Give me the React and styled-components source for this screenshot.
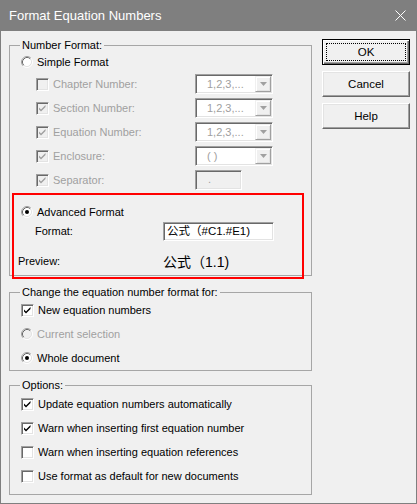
import * as React from 'react'
import styled, { createGlobalStyle } from 'styled-components'

const GlobalStyle = createGlobalStyle`
	html, body {
		margin: 0;
		padding: 0;
		background: #f0f0f0;
	}
	body {
		font-family: "Liberation Sans", "Noto Sans CJK SC", sans-serif;
		font-size: 11px;
		color: #000;
	}
`

const CheckMark = ({ color }) =>
	<svg width="9" height="9" viewBox="0 0 9 9">
		<path d="M1 3.5 L3 5.5 L7.5 1 L7.5 3 L3 7.5 L1 5.5 Z" fill={color}/>
	</svg>

const CheckBox = ({ checked, disabled }) =>
	<StyledCheck $disabled={disabled}>
		{checked && <CheckMark color={disabled ? '#a0a0a0' : '#000'}/>}
	</StyledCheck>

const Radio = ({ checked, disabled }) =>
	<svg width="12" height="12" viewBox="0 0 12 12">
		<circle cx="6" cy="6" r="4.5" fill={disabled ? '#f0f0f0' : '#fff'}/>
		<path d="M2.11 9.89 A5.5 5.5 0 0 1 9.89 2.11" stroke="#a0a0a0" fill="none"/>
		<path d="M9.89 2.11 A5.5 5.5 0 0 1 2.11 9.89" stroke="#ffffff" fill="none"/>
		<path d="M2.82 9.18 A4.5 4.5 0 0 1 9.18 2.82" stroke="#696969" fill="none"/>
		<path d="M9.18 2.82 A4.5 4.5 0 0 1 2.82 9.18" stroke="#e3e3e3" fill="none"/>
		{checked && <circle cx="6" cy="6" r="2" fill="#000"/>}
	</svg>

const Combo = ({ value }) =>
	<StyledCombo>
		<ComboText>{value}</ComboText>
		<ComboButton>
			<svg width="7" height="4" viewBox="0 0 7 4">
				<path d="M0 0 H7 L3.5 4 Z" fill="#a0a0a0"/>
			</svg>
		</ComboButton>
	</StyledCombo>

const simpleRows = [
	{ label: 'Chapter Number:', checked: false, combo: '1,2,3,...' },
	{ label: 'Section Number:', checked: true, combo: '1,2,3,...' },
	{ label: 'Equation Number:', checked: true, combo: '1,2,3,...' },
	{ label: 'Enclosure:', checked: true, combo: '( )' },
	{ label: 'Separator:', checked: true, edit: '.' },
]

const options = [
	{ label: 'Update equation numbers automatically', checked: true },
	{ label: 'Warn when inserting first equation number', checked: true },
	{ label: 'Warn when inserting equation references', checked: false },
	{ label: 'Use format as default for new documents', checked: false },
]

const App = () =>
	<>
		<GlobalStyle/>
		<Window>
			<TitleBar>
				<Title>Format Equation Numbers</Title>
				<svg width="11" height="11" viewBox="0 0 11 11">
					<path d="M0.5 0.5 L10.5 10.5 M10.5 0.5 L0.5 10.5" stroke="#fff" strokeWidth="1"/>
				</svg>
			</TitleBar>
			<Body>
				<Main>
					<Group>
						<Legend>Number Format:</Legend>
						<RadioRow>
							<Radio/>
							<span>Simple Format</span>
						</RadioRow>
						{simpleRows.map(row =>
							<SubRow key={row.label}>
								<CheckBox checked={row.checked} disabled/>
								<SubLabel>{row.label}</SubLabel>
								{row.combo
									? <Combo value={row.combo}/>
									: <DisabledEdit>{row.edit}</DisabledEdit>}
							</SubRow>
						)}
						<Highlight>
							<AdvancedRow>
								<Radio checked/>
								<span>Advanced Format</span>
							</AdvancedRow>
							<FormatRow>
								<FormatLabel>Format:</FormatLabel>
								<Edit>公式（#C1.#E1)</Edit>
							</FormatRow>
							<PreviewRow>
								<PreviewLabel>Preview:</PreviewLabel>
								<PreviewValue>公式（1.1)</PreviewValue>
							</PreviewRow>
						</Highlight>
					</Group>

					<Group $gap={9}>
						<Legend>Change the equation number format for:</Legend>
						<List>
							<OptionRow>
								<CheckBox checked/>
								<span>New equation numbers</span>
							</OptionRow>
							<OptionRow $disabled>
								<Radio disabled/>
								<span>Current selection</span>
							</OptionRow>
							<OptionRow>
								<Radio checked/>
								<span>Whole document</span>
							</OptionRow>
						</List>
					</Group>

					<Group $gap={7} $bottom={6}>
						<Legend>Options:</Legend>
						{options.map(o =>
							<OptionRow key={o.label}>
								<CheckBox checked={o.checked}/>
								<span>{o.label}</span>
							</OptionRow>
						)}
					</Group>
				</Main>
				<Buttons>
					<Button $default>OK</Button>
					<Button>Cancel</Button>
					<Button>Help</Button>
				</Buttons>
			</Body>
		</Window>
	</>

export default App;

const Window = styled.div`
	width: 417px;
	height: 504px;
	box-sizing: border-box;
	border: 1px solid #7f7f7f;
	border-top: 0;
	background: #f0f0f0;
	display: flex;
	flex-direction: column;
`

const TitleBar = styled.div`
	height: 31px;
	margin: 0 -1px;
	background: #7f7f7f;
	display: flex;
	align-items: center;
	justify-content: space-between;
	padding: 0 11px 0 9px;
	flex-shrink: 0;
`

const Title = styled.div`
	font-family: "Liberation Sans", sans-serif;
	font-size: 13px;
	color: #fff;
	margin-top: -1px;
`

const Body = styled.div`
	display: flex;
	align-items: flex-start;
	padding: 7px 0 0 8px;
`

const Main = styled.div`
	width: 303px;
	display: flex;
	flex-direction: column;
`

const Group = styled.fieldset`
	margin: ${p => p.$gap || 0}px 0 0 0;
	padding: 0 0 ${p => p.$bottom || 0}px 0;
	border: 1px solid #a6a6a6;
	box-sizing: border-box;
	width: 303px;
	min-width: 0;
`

const Legend = styled.legend`
	margin-left: 10px;
	padding: 0 2px;
	line-height: 14px;
	height: 14px;
`

const RadioRow = styled.div`
	display: flex;
	align-items: center;
	gap: 4px;
	height: 20px;
	padding-left: 11px;
`

const SubRow = styled.div`
	display: flex;
	align-items: center;
	height: 24px;
	padding-left: 26px;
`

const SubLabel = styled.span`
	width: 142px;
	margin-left: 4px;
	color: #a0a0a0;
`

const StyledCheck = styled.span`
	width: 13px;
	height: 13px;
	box-sizing: border-box;
	flex-shrink: 0;
	display: flex;
	align-items: center;
	justify-content: center;
	background: ${p => p.$disabled ? '#f0f0f0' : '#fff'};
	border: 1px solid;
	border-color: #a0a0a0 #fff #fff #a0a0a0;
	box-shadow: inset 1px 1px 0 #696969, inset -1px -1px 0 #e3e3e3;
`

const StyledCombo = styled.div`
	width: 78px;
	height: 20px;
	box-sizing: border-box;
	display: flex;
	align-items: center;
	padding: 2px;
	background: #fff;
	border: 1px solid;
	border-color: #a0a0a0 #fff #fff #a0a0a0;
	box-shadow: inset 1px 1px 0 #696969, inset -1px -1px 0 #e3e3e3;
`

const ComboText = styled.span`
	flex: 1;
	min-width: 0;
	padding-left: 9px;
	color: #a0a0a0;
	white-space: nowrap;
	overflow: hidden;
`

const ComboButton = styled.span`
	width: 16px;
	height: 16px;
	box-sizing: border-box;
	flex-shrink: 0;
	margin-right: -1px;
	display: flex;
	align-items: center;
	justify-content: center;
	background: #f0f0f0;
	border: 1px solid;
	border-color: #f0f0f0 #a0a0a0 #a0a0a0 #f0f0f0;
	box-shadow: inset 1px 1px 0 #fff, inset -1px -1px 0 #e3e3e3;
`

const DisabledEdit = styled.div`
	width: 47px;
	height: 20px;
	box-sizing: border-box;
	padding-left: 12px;
	line-height: 17px;
	color: #a0a0a0;
	background: #f0f0f0;
	border: 1px solid;
	border-color: #a0a0a0 #fff #fff #a0a0a0;
	box-shadow: inset 1px 1px 0 #696969, inset -1px -1px 0 #e3e3e3;
`

const Highlight = styled.div`
	margin: 1px 7px -4px 2px;
	border: 2px solid #ff0000;
	padding: 8px 0 6px 0;
`

const AdvancedRow = styled(RadioRow)`
	height: 18px;
	padding-left: 7px;
`

const FormatRow = styled.div`
	display: flex;
	align-items: center;
	height: 20px;
	padding-left: 21px;
`

const FormatLabel = styled.span`
	width: 128px;
`

const Edit = styled.div`
	width: 111px;
	height: 19px;
	box-sizing: border-box;
	padding-left: 3px;
	font-size: 11.5px;
	line-height: 16px;
	background: #fff;
	border: 1px solid;
	border-color: #a0a0a0 #fff #fff #a0a0a0;
	box-shadow: inset 1px 1px 0 #696969, inset -1px -1px 0 #e3e3e3;
	white-space: nowrap;
`

const PreviewRow = styled.div`
	display: flex;
	align-items: center;
	height: 20px;
	margin-top: 10px;
	padding-left: 4px;
`

const PreviewLabel = styled.span`
	width: 145px;
`

const PreviewValue = styled.span`
	font-size: 14px;
`

const List = styled.div`
	margin-top: -1px;
`

const OptionRow = styled.div`
	display: flex;
	align-items: center;
	gap: 4px;
	height: 24px;
	padding-left: 11px;
	color: ${p => p.$disabled ? '#a0a0a0' : '#000'};
`

const Buttons = styled.div`
	display: flex;
	flex-direction: column;
	gap: 6px;
	margin: 1px 0 0 10px;
`

const Button = styled.button`
	width: 88px;
	height: 26px;
	padding: 0;
	font-family: "Liberation Sans", sans-serif;
	font-size: 11.5px;
	color: #000;
	background: #f0f0f0;
	border: 1px solid;
	border-color: ${p => p.$default ? '#000' : '#fff #696969 #696969 #fff'};
	box-shadow: ${p => p.$default
		? 'inset 1px 1px 0 #fff, inset -1px -1px 0 #696969, inset -2px -2px 0 #a0a0a0'
		: 'inset -1px -1px 0 #a0a0a0, inset 1px 1px 0 #e3e3e3'};
	outline: ${p => p.$default ? '1px dotted #000' : 'none'};
	outline-offset: -5px;
`
